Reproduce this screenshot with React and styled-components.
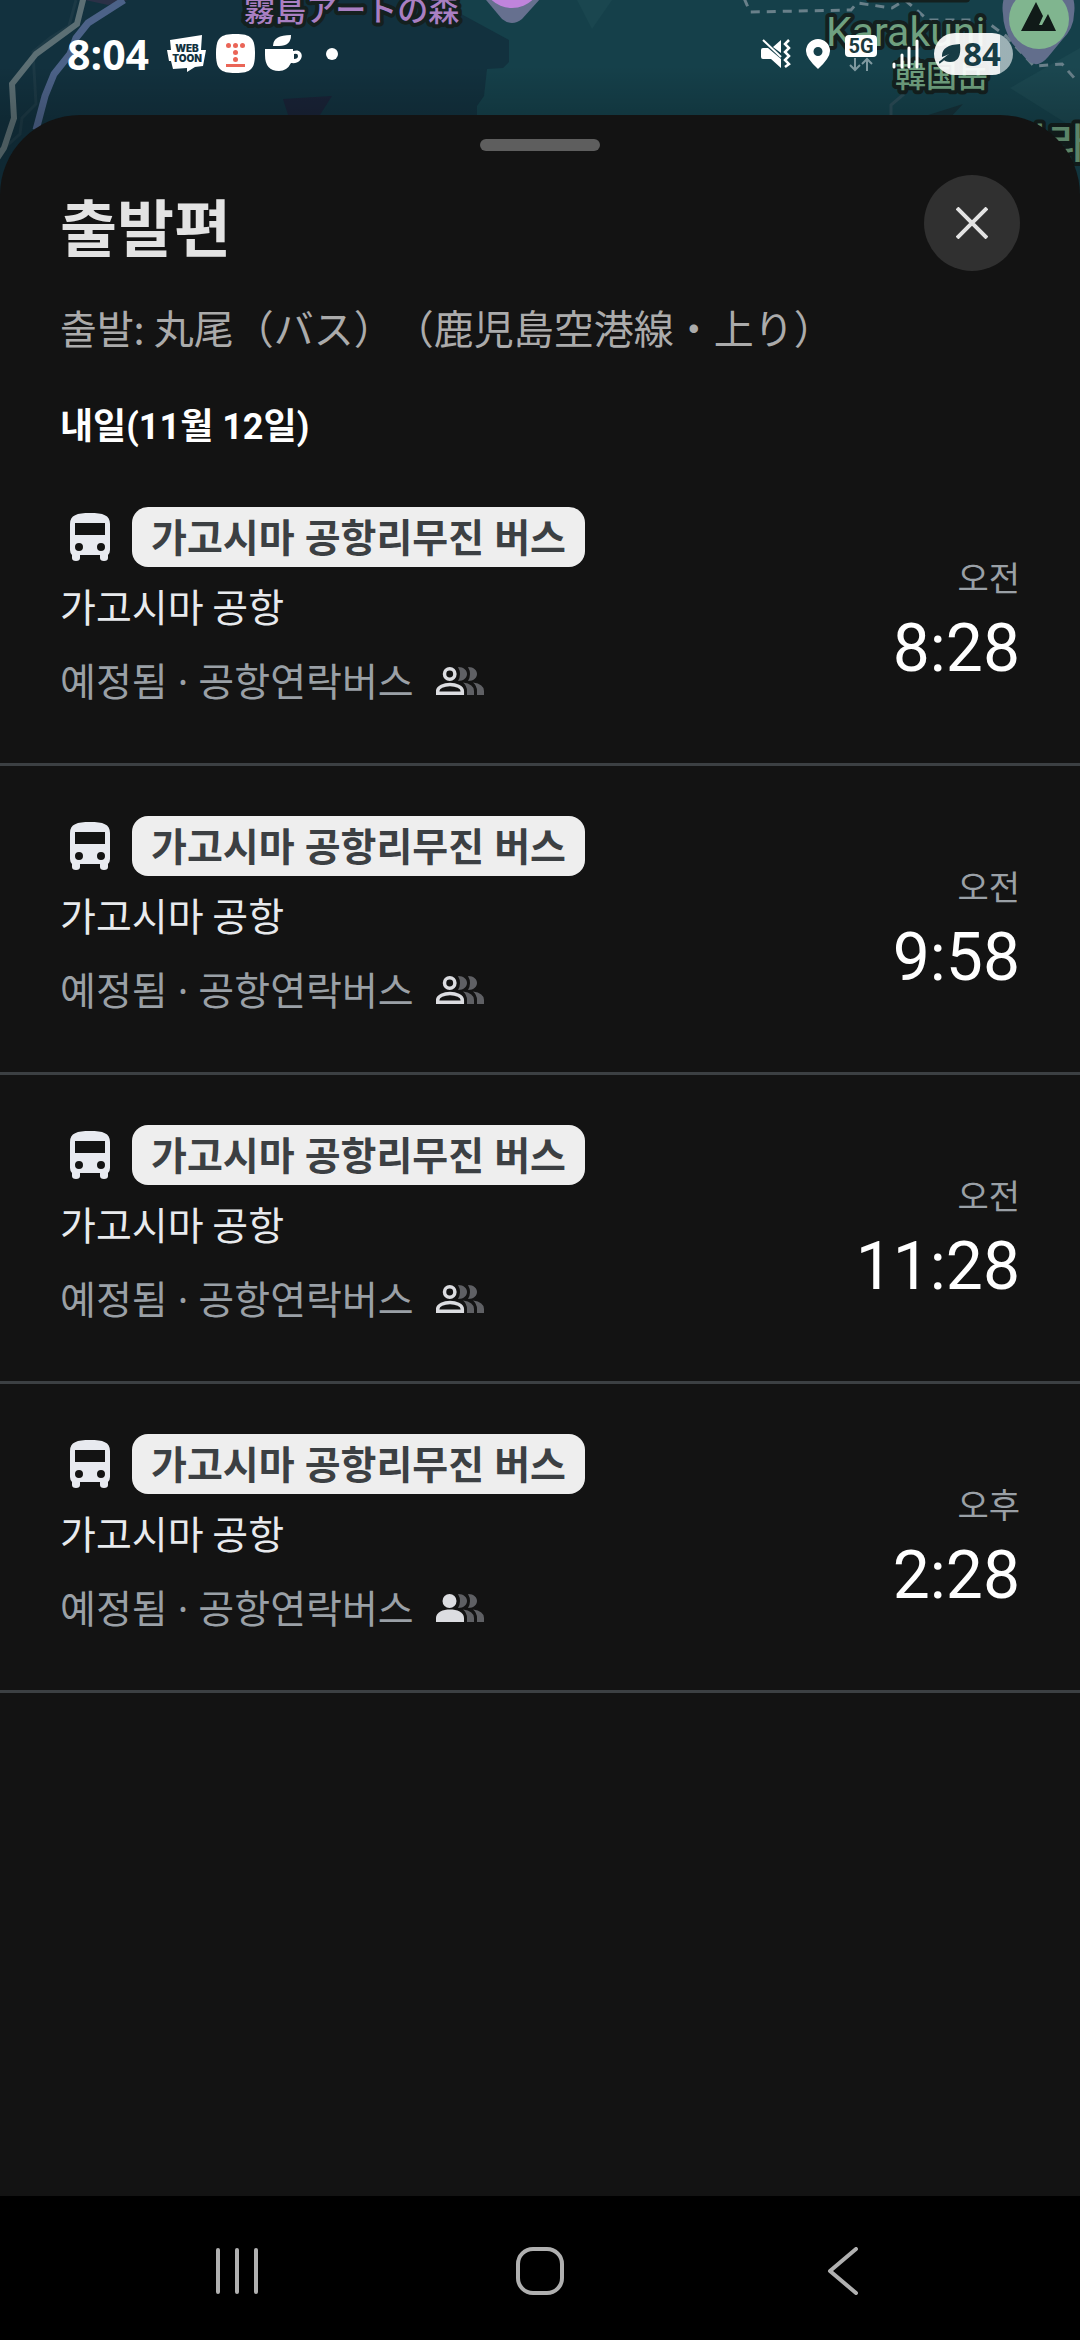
import React from 'react';
import styled, { createGlobalStyle } from 'styled-components';

const departures = [
  { id: 1, period: '오전', time: '8:28', crowded: false },
  { id: 2, period: '오전', time: '9:58', crowded: false },
  { id: 3, period: '오전', time: '11:28', crowded: false },
  { id: 4, period: '오후', time: '2:28', crowded: true },
];

const MapArt = () => (
  <MapSvg viewBox="0 0 1080 220" preserveAspectRatio="xMidYMin slice" aria-hidden="true">
    <defs>
      <linearGradient id="shade" x1="0" y1="0" x2="0" y2="1">
        <stop offset="0.3" stopColor="#000" stopOpacity="0" />
        <stop offset="0.56" stopColor="#000" stopOpacity="0.18" />
      </linearGradient>
    </defs>
    <rect width="1080" height="220" fill="#15404a" />
    <path d="M0 0H440L463 15L509 40V62L503 68L487 69L484 96L477 106V220H0Z" fill="#12313e" />
    <path d="M577 0H612L592 29Z" fill="#1a464f" />
    <path d="M1080 48L1010 88L1080 132Z" fill="#1b4750" />
    <path d="M283 99L332 96L318 118H289Z" fill="#192337" />
    <path d="M85 0H128L108 5Z" fill="#2b3147" />
    <path d="M925 116L963 104L950 118Z" fill="#153038" />
    <path d="M76 0L69 26L50 38L33 52L36 104L22 118L20 134L0 152" fill="none" stroke="#1c3945" strokeWidth="3" />
    <path d="M124 0L88 23L76 38L70 54L54 74L45 96L36 130" fill="none" stroke="#4c6288" strokeWidth="7" />
    <path d="M84 -4L77 24L36 54L12 84L14 118L4 148L-4 160" fill="none" stroke="#5c6f74" strokeWidth="6" />
    <path d="M744 -2L750 12L851 10L857 3L892 8L905 0L928 20L984 20L1006 36L1034 66L1062 64L1076 80" fill="none" stroke="#69808a" strokeWidth="3" strokeDasharray="9 7" />
    <path d="M904 94L891 105V116" fill="none" stroke="#2a4b56" strokeWidth="3" />
    <path d="M870 -2H966" stroke="#14201f" strokeWidth="9" strokeLinecap="round" />
    <MapLabel x="244" y="21" $size={31} $color="#a97fc2">霧島アートの森</MapLabel>
    <MapLabel x="826" y="46" $size={41} $color="#6fa07f" $latin>Karakuni</MapLabel>
    <MapLabel x="895" y="87" $size={31} $color="#6fa07f">韓国岳</MapLabel>
    <MapLabel x="1011" y="158" $size={41} $color="#6fa07f">가라</MapLabel>
    <path d="M476 -12H550L522 19Q512 27 502 19Z" fill="#66708f" />
    <circle cx="512" cy="-22" r="30" fill="#c084dc" />
    <path d="M1003 14A36 36 0 1 1 1074 14Q1074 28 1062 40L1048 57Q1038 69 1028 61L1012 43Q1003 28 1003 14Z" fill="#626e8c" />
    <circle cx="1039" cy="19" r="30" fill="#80b58f" />
    <path d="M1021 31L1036 2L1043 16L1039 25L1042 25L1048 14L1056 31Z" fill="#101a18" />
    <rect width="1080" height="220" fill="url(#shade)" />
  </MapSvg>
);

const BusIcon = () => (
  <svg width="40" height="48" viewBox="0 0 40 48" aria-hidden="true">
    <path fill="#e8eaf0" fillRule="evenodd" d="M0 11C0 2 7 0 20 0S40 2 40 11V37Q40 40 38 42V45Q38 48 34 48T30 45V42H10V45Q10 48 6 48T2 45V42Q0 40 0 37ZM5 10V22H35V10ZM9 30A4 4 0 1 0 9 38A4 4 0 1 0 9 30ZM31 30A4 4 0 1 0 31 38A4 4 0 1 0 31 30Z" />
  </svg>
);

const CrowdIcon = ({ filled }) => (
  <svg width="48" height="28" viewBox="0 0 48 28" role="img" aria-label={filled ? '혼잡' : '여유'}>
    <g fill="#5f6064">
      <path d="M22 0C34 0 34 14 22 14Q26 7 22 0Z" />
      <path d="M32 0C44 0 44 14 32 14Q36 7 32 0Z" />
      <path d="M27 15.500Q38 17 38 24V28H31V24Q31 19 27 15.500Z" />
      <path d="M37 15.500Q48 17 48 24V28H41V24Q41 19 37 15.500Z" />
    </g>
    {filled ? (
      <g fill="#dcdde1">
        <circle cx="13.500" cy="7" r="7" />
        <path d="M0 28V24C0 18 7 15.500 14 15.500S28 18 28 24V28Z" />
      </g>
    ) : (
      <g fill="none" stroke="#dcdde1" strokeWidth="3.500">
        <circle cx="13.700" cy="7" r="5.200" />
        <path d="M1.700 26.200V24C1.700 20 8 17.500 14 17.500S26.300 20 26.300 24V26.200Z" />
      </g>
    )}
  </svg>
);

const WebtoonIcon = () => (
  <svg width="39" height="37" viewBox="0 0 39 37" aria-hidden="true">
    <path d="M3 5L35 0L34 15H39L36 31L28 32L20 37V33L6 34L4 26L2 26L0 15H4Z" fill="#fff" />
    <g fill="#12313e" fontFamily="Inter, sans-serif" fontWeight="900" textAnchor="middle">
      <text x="20" y="17" fontSize="10">WEB</text>
      <text x="20" y="27" fontSize="10">TOON</text>
    </g>
  </svg>
);

const DotsIcon = () => (
  <svg width="39" height="39" viewBox="0 0 39 39" aria-hidden="true">
    <path d="M19.500 0C35 0 39 4 39 19.500S35 39 19.500 39S0 35 0 19.500S4 0 19.500 0Z" fill="#fff" />
    <g fill="#ea6557">
      <circle cx="12.500" cy="11.500" r="2.500" />
      <circle cx="19.500" cy="11.500" r="2.500" />
      <circle cx="26.500" cy="11.500" r="2.500" />
      <circle cx="19.500" cy="18.500" r="2.500" />
      <circle cx="19.500" cy="25.500" r="2.500" />
      <rect x="10" y="30" width="19" height="3" />
    </g>
  </svg>
);

const CupIcon = () => (
  <svg width="37" height="37" viewBox="0 0 37 37" aria-hidden="true">
    <path d="M8 11Q8 0 26 0Q26 11 14 11Z" fill="#fff" />
    <path d="M0 14H28V16C40 12 40 30 26 28Q22 36 14 36Q0 36 0 20ZM29 19V24Q33 24 33 21T29 19Z" fill="#fff" fillRule="evenodd" />
  </svg>
);

const MuteIcon = () => (
  <svg width="30" height="30" viewBox="0 0 30 30" aria-hidden="true">
    <path d="M0 11Q0 9 2 9H7L20 20V29L10 20H2Q0 20 0 18ZM12 8L20 1V14Z" fill="#fff" />
    <path d="M2 1L20 18" stroke="#fff" strokeWidth="2" />
    <path d="M28 1L24 5L28 9L24 13L28 17L24 21L28 25L24 28" fill="none" stroke="#fff" strokeWidth="2.500" />
  </svg>
);

const PinIcon = () => (
  <svg width="24" height="30" viewBox="0 0 24 30" aria-hidden="true">
    <path fillRule="evenodd" d="M12 0A12 12 0 0 1 24 12Q24 19 12 30Q0 19 0 12A12 12 0 0 1 12 0ZM12 8A4.500 4.500 0 1 0 12 17A4.500 4.500 0 1 0 12 8Z" fill="#fff" />
  </svg>
);

const DataIcon = () => (
  <svg width="32" height="37" viewBox="0 0 32 37" aria-hidden="true">
    <rect width="32" height="22" rx="4" fill="#fff" />
    <text x="16" y="18" textAnchor="middle" fontFamily="Roboto, sans-serif" fontWeight="700" fontSize="20" fill="#1c3a3e">5G</text>
    <path d="M10 23V35M5 30L10 35L15 30M22 36V24M17 29L22 24L27 29" fill="none" stroke="#7f99a0" strokeWidth="2" />
  </svg>
);

const SignalIcon = () => (
  <svg width="27" height="30" viewBox="0 0 27 30" aria-hidden="true">
    <path d="M2 25V28M10 16V28M17 9V28M25 2V28" stroke="#fff" strokeWidth="3" strokeLinecap="round" />
  </svg>
);

const LeafIcon = () => (
  <svg width="22" height="22" viewBox="0 0 22 22" aria-hidden="true">
    <path d="M21 1Q23 19 11 19Q6 19 4 16L13 10L3 14Q2 2 21 1Z" fill="#173c45" />
    <path d="M0 20L14 9" stroke="#173c45" strokeWidth="2" />
  </svg>
);

const Departure = ({ departure }) => (
  <Row>
    <Trip>
      <Line>
        <IconSlot><BusIcon /></IconSlot>
        <Badge>가고시마 공항리무진 버스</Badge>
      </Line>
      <Destination>가고시마 공항</Destination>
      <Status>
        예정됨 · 공항연락버스
        <CrowdIcon filled={departure.crowded} />
      </Status>
    </Trip>
    <TimeBlock>
      <Period>{departure.period}</Period>
      <Time>{departure.time}</Time>
    </TimeBlock>
  </Row>
);

export default function App() {
  return (
    <>
      <GlobalStyle />
      <Screen>
        <MapArt />
        <StatusBar>
          <StatusGroup $gap={10}>
            <Clock>8:04</Clock>
            <WebtoonIcon />
            <DotsIcon />
            <CupIcon />
            <MoreDot />
          </StatusGroup>
          <StatusGroup $gap={15}>
            <MuteIcon />
            <PinIcon />
            <DataIcon />
            <SignalIcon />
            <Battery><LeafIcon />84</Battery>
          </StatusGroup>
        </StatusBar>
        <Sheet>
          <Handle />
          <Header>
            <Title>출발편</Title>
            <CloseButton aria-label="닫기">
              <svg width="32" height="32" viewBox="0 0 32 32" aria-hidden="true">
                <path d="M1 1L31 31M31 1L1 31" stroke="#e3e3e3" strokeWidth="4" />
              </svg>
            </CloseButton>
          </Header>
          <Stop>출발: <span lang="ja">丸尾（バス）（鹿児島空港線・上り）</span></Stop>
          <DateHeading>내일(11월 12일)</DateHeading>
          <List>
            {departures.map((departure) => (
              <Departure key={departure.id} departure={departure} />
            ))}
          </List>
        </Sheet>
        <NavBar>
          <NavButton aria-label="최근 앱">
            <svg width="48" height="48" viewBox="0 0 48 48">
              <path d="M5 3V45M24 3V45M43 3V45" stroke="#b0b0b0" strokeWidth="4" strokeLinecap="round" />
            </svg>
          </NavButton>
          <NavButton aria-label="홈">
            <svg width="48" height="48" viewBox="0 0 48 48">
              <rect x="2" y="2" width="44" height="44" rx="15" fill="none" stroke="#b0b0b0" strokeWidth="4" />
            </svg>
          </NavButton>
          <NavButton aria-label="뒤로">
            <svg width="48" height="48" viewBox="0 0 48 48">
              <path d="M37 2L11 24L37 46" fill="none" stroke="#b0b0b0" strokeWidth="4" strokeLinecap="round" strokeLinejoin="round" />
            </svg>
          </NavButton>
        </NavBar>
      </Screen>
    </>
  );
}

const GlobalStyle = createGlobalStyle`
  * {
    box-sizing: border-box;
  }

  body {
    margin: 0;
    background: #131313;
    font-family: "Noto Sans CJK KR", sans-serif;
  }

  svg {
    display: block;
    flex-shrink: 0;
  }
`;

const Screen = styled.div`
  position: relative;
  display: flex;
  flex-direction: column;
  min-height: 100vh;
  overflow: hidden;
`;

const MapSvg = styled.svg`
  position: absolute;
  top: 0;
  left: 0;
  width: 100%;
  height: 220px;
`;

const MapLabel = styled.text`
  font-family: ${props => props.$latin ? `Roboto` : `"Noto Sans CJK JP"`}, sans-serif;
  font-size: ${props => props.$size}px;
  font-weight: ${props => props.$latin ? 400 : 500};
  fill: ${props => props.$color};
  stroke: #14201f;
  stroke-width: 8px;
  stroke-linejoin: round;
  paint-order: stroke;
`;

const StatusBar = styled.div`
  position: relative;
  display: flex;
  justify-content: space-between;
  align-items: center;
  height: 115px;
  padding: 0 67px 8px;
`;

const StatusGroup = styled.div`
  display: flex;
  align-items: center;
  gap: ${props => props.$gap}px;
`;

const Clock = styled.span`
  color: #fff;
  font-family: "Open Sans", sans-serif;
  font-size: 41px;
  line-height: 48px;
  font-weight: 700;
  margin-right: 8px;
`;

const MoreDot = styled.i`
  width: 12px;
  height: 12px;
  margin-left: 14px;
  border-radius: 50%;
  background: #fff;
`;

const Battery = styled.span`
  display: flex;
  align-items: center;
  gap: 2px;
  height: 42px;
  padding: 0 12px 0 5px;
  border-radius: 21px;
  background: linear-gradient(90deg, rgba(255, 255, 255, .92) 84%, rgba(190, 205, 208, .8) 84%);
  color: #173c45;
  font-family: "Open Sans", sans-serif;
  font-size: 33px;
  line-height: 42px;
  font-weight: 700;
`;

const Sheet = styled.main`
  position: relative;
  flex: 1;
  padding-top: 24px;
  border-radius: 80px 80px 0 0;
  background: #131313;
`;

const Handle = styled.div`
  width: 120px;
  height: 12px;
  margin: 0 auto 24px;
  border-radius: 6px;
  background: #5e5e5e;
`;

const Header = styled.header`
  display: flex;
  justify-content: space-between;
  align-items: flex-start;
  padding: 0 60px;
`;

const Title = styled.h1`
  margin: 0;
  padding-top: 6px;
  color: #e3e3e3;
  font-size: 62px;
  line-height: 88px;
  font-weight: 700;
`;

const CloseButton = styled.button`
  display: flex;
  justify-content: center;
  align-items: center;
  width: 96px;
  height: 96px;
  padding: 0;
  border: 0;
  border-radius: 50%;
  background: #303030;
`;

const Stop = styled.p`
  margin: 0;
  padding: 26px 60px 0;
  color: #ababab;
  font-size: 40px;
  line-height: 60px;
  text-spacing-trim: space-all;

  span {
    font-family: "Noto Sans CJK JP", sans-serif;
  }
`;

const DateHeading = styled.h2`
  margin: 0;
  padding: 46px 60px 6px;
  color: #fff;
  font-family: Roboto, "Noto Sans CJK KR", sans-serif;
  font-size: 36px;
  line-height: 48px;
  font-weight: 700;
`;

const List = styled.ul`
  margin: 0;
  padding: 0;
  list-style: none;
`;

const Row = styled.li`
  display: flex;
  justify-content: space-between;
  padding: 50px 60px 52px;
  border-bottom: 3px solid #3c4043;
`;

const Trip = styled.div`
  display: flex;
  flex-direction: column;
`;

const Line = styled.div`
  display: flex;
  align-items: center;
`;

const IconSlot = styled.span`
  display: flex;
  justify-content: center;
  width: 60px;
  margin-right: 12px;
`;

const Badge = styled.span`
  padding: 0 19px;
  border-radius: 16px;
  background: #eee;
  color: #3c4043;
  font-family: "Noto Sans", "Noto Sans CJK KR", sans-serif;
  font-size: 39px;
  line-height: 60px;
  font-weight: 700;
`;

const Destination = styled.div`
  margin-top: 8px;
  color: #e8eaed;
  font-size: 39px;
  line-height: 60px;
`;

const Status = styled.div`
  display: flex;
  align-items: center;
  gap: 22px;
  margin-top: 16px;
  color: #9aa0a6;
  font-family: "Noto Sans", "Noto Sans CJK KR", sans-serif;
  font-size: 39px;
  line-height: 60px;
`;

const TimeBlock = styled.div`
  display: flex;
  flex-direction: column;
  align-items: flex-end;
  padding-top: 46px;
`;

const Period = styled.span`
  color: #9aa0a6;
  font-size: 34px;
  line-height: 48px;
`;

const Time = styled.time`
  color: #fff;
  font-family: Roboto, sans-serif;
  font-size: 66px;
  line-height: 96px;
`;

const NavBar = styled.nav`
  position: relative;
  display: grid;
  grid-template-columns: repeat(3, 1fr);
  height: 144px;
  padding: 0 86px;
  background: #000;
`;

const NavButton = styled.button`
  display: flex;
  justify-content: center;
  align-items: center;
  padding: 6px 0 0;
  border: 0;
  background: none;
`;
